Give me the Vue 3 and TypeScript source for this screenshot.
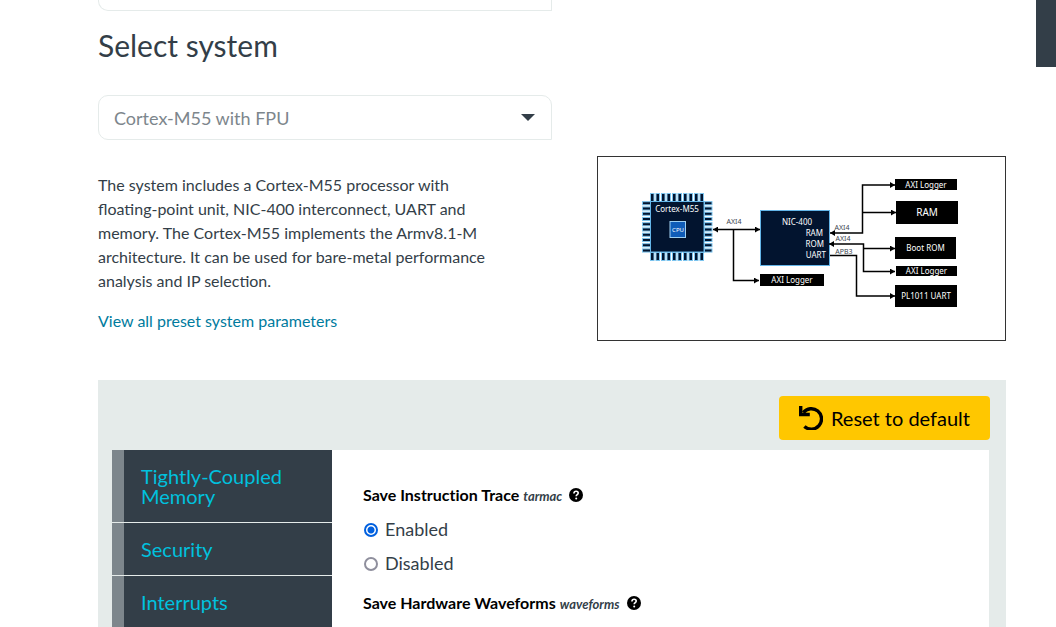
<script setup lang="ts">
import { ref } from 'vue'

interface Block { x: number; y: number; w: number; h: number; label: string; size: number }
interface Setting { id: string; title: string; code: string; value: string }

const systems = ['Cortex-M55 with FPU']
const system = ref(systems[0])
const tabs = ['Tightly-Coupled Memory', 'Security', 'Interrupts']
const settings = ref<Setting[]>([
  { id: 'tarmac', title: 'Save Instruction Trace', code: 'tarmac', value: 'Enabled' },
  { id: 'waveforms', title: 'Save Hardware Waveforms', code: 'waveforms', value: 'Disabled' },
])
const options = ['Enabled', 'Disabled']

const blocks: Block[] = [
  { x: 162, y: 117, w: 64, h: 12, label: 'AXI Logger', size: 8 },
  { x: 297, y: 22, w: 62, h: 11, label: 'AXI Logger', size: 8 },
  { x: 298, y: 44, w: 62, h: 23, label: 'RAM', size: 10 },
  { x: 297, y: 80, w: 61, h: 22, label: 'Boot ROM', size: 8 },
  { x: 298, y: 109, w: 61, h: 10, label: 'AXI Logger', size: 8 },
  { x: 297, y: 128, w: 62, h: 22, label: 'PL1011 UART', size: 8 },
]
const pins = Array.from({ length: 10 }, (_, i) => i)

function reset(): void {
  settings.value.forEach((s, i) => { s.value = options[i] })
}
</script>

<template>
  <div class="page">
    <aside class="side-tab"></aside>
    <main class="content">
      <div class="previous-field"></div>
      <h2 class="heading"><label for="system">Select system</label></h2>
      <div class="overview">
        <div class="summary">
          <div class="select-wrap">
            <select id="system" v-model="system" class="select">
              <option v-for="s in systems" :key="s">{{ s }}</option>
            </select>
            <svg class="caret" viewBox="0 0 14 7" aria-hidden="true"><path d="M0 0H14L7 7Z" /></svg>
          </div>
          <p class="description">
            The system includes a Cortex-M55 processor with floating-point unit, NIC-400 interconnect,
            UART and memory. The Cortex-M55 implements the Armv8.1-M architecture. It can be used for
            bare-metal performance analysis and IP selection.
          </p>
          <a class="link" href="#parameters">View all preset system parameters</a>
        </div>
        <div class="figure">
          <svg class="diagram" viewBox="0 0 407 183" role="img" aria-label="Cortex-M55 system diagram">
            <defs>
              <marker id="arrow" viewBox="0 0 5 6" refX="5" refY="3" markerWidth="5" markerHeight="6" markerUnits="userSpaceOnUse" orient="auto-start-reverse">
                <path d="M0 0L5 3L0 6Z" />
              </marker>
            </defs>
            <g class="pins">
              <template v-for="i in pins" :key="i">
                <rect :x="52.5 + i * 5.5" y="36.5" width="3.5" height="9" />
                <rect :x="52.5 + i * 5.5" y="95.5" width="3.5" height="8" />
                <rect x="44.5" :y="44.7 + i * 5.25" width="8" height="3.1" />
                <rect x="106.5" :y="44.7 + i * 5.25" width="7.5" height="3.1" />
              </template>
            </g>
            <rect class="chip" x="52.5" y="44.5" width="53.5" height="50.5" />
            <rect class="cpu" x="72" y="64.5" width="15.5" height="16" />
            <rect class="chip" x="162.5" y="53.5" width="69" height="55" />
            <g class="wires">
              <path marker-start="url(#arrow)" marker-end="url(#arrow)" d="M115 72.5H162" />
              <path marker-end="url(#arrow)" d="M135.5 72.5V123.5H161" />
              <path marker-start="url(#arrow)" marker-end="url(#arrow)" d="M232 76H264.5V28H297" />
              <path marker-end="url(#arrow)" d="M264.5 55.5H298" />
              <path marker-start="url(#arrow)" marker-end="url(#arrow)" d="M231 87H265.5V114.5H297" />
              <path marker-end="url(#arrow)" d="M265.5 91.5H297" />
              <path marker-end="url(#arrow)" d="M232 98.5H258.5V139H297" />
            </g>
            <g v-for="(b, i) in blocks" :key="i">
              <rect :x="b.x" :y="b.y" :width="b.w" :height="b.h" />
              <text class="block-text" :x="b.x + b.w / 2" :y="b.y + b.h / 2 + 3" :font-size="b.size">{{ b.label }}</text>
            </g>
            <text class="block-text" x="79" y="55" font-size="8">Cortex-M55</text>
            <text class="block-text" x="80" y="75" font-size="6">CPU</text>
            <text class="block-text" x="199" y="68" font-size="8">NIC-400</text>
            <text class="port" x="225" y="79">RAM</text>
            <text class="port" x="226" y="90">ROM</text>
            <text class="port" x="228" y="101">UART</text>
            <text class="bus" x="136" y="67">AXI4</text>
            <text class="bus" x="244" y="73">AXI4</text>
            <text class="bus" x="245" y="84">AXI4</text>
            <text class="bus" x="246" y="97">APB3</text>
          </svg>
        </div>
      </div>

      <section class="config">
        <div class="toolbar">
          <button class="reset" type="button" @click="reset">
            <svg class="reset-icon" viewBox="0 0 24 24" aria-hidden="true">
              <path class="reset-arc" d="M4.3 6.6A10.2 10.2 0 1 1 5.4 20.4" />
              <path d="M0 0H3.4V6.8H10.8V10.2H0Z" />
            </svg>
            <span>Reset to default</span>
          </button>
        </div>
        <div class="panel">
          <nav class="tabs">
            <button v-for="t in tabs" :key="t" class="tab" type="button">{{ t }}</button>
          </nav>
          <form class="settings">
            <fieldset v-for="s in settings" :key="s.id" class="setting">
              <legend class="legend">
                <span class="title">{{ s.title }}</span>
                <em class="code">{{ s.code }}</em>
                <svg class="help" viewBox="0 0 14 14" aria-hidden="true">
                  <circle cx="7" cy="7" r="7" />
                  <path class="help-mark" d="M4.9 5.5C5 3.8 6 3.3 7.1 3.3C8.3 3.3 9.2 4 9.2 5.1C9.2 6.7 7.2 6.6 7.2 8.3" />
                  <circle class="help-dot" cx="7.2" cy="10.5" r="1" />
                </svg>
              </legend>
              <label v-for="o in options" :key="o" class="option">
                <input v-model="s.value" class="radio" type="radio" :name="s.id" :value="o" />
                <span>{{ o }}</span>
              </label>
            </fieldset>
          </form>
        </div>
      </section>
    </main>
  </div>
</template>

<style>
body {
  margin: 0;
  background: #fff;
}
</style>

<style scoped>
.page {
  position: relative;
  box-sizing: border-box;
  height: 100vh;
  overflow: hidden;
  padding: 0 50px 0 98px;
  font-family: Lato, "Liberation Sans", sans-serif;
  font-size: 16px;
  line-height: 24px;
  color: #333e48;
}
.side-tab {
  position: absolute;
  top: 0;
  right: 0;
  width: 20px;
  height: 67px;
  background: #333e48;
}
.previous-field {
  box-sizing: border-box;
  width: 50%;
  height: 11px;
  border: 1px solid #e5ebea;
  border-top: 0;
  border-radius: 0 0 0 10px;
}
.heading {
  margin: 14px 0 30px;
  font-size: 30px;
  line-height: 40px;
  font-weight: 400;
}
.overview {
  display: grid;
  grid-template-columns: 1fr 1fr;
}
.summary {
  display: flex;
  flex-direction: column;
  align-items: flex-start;
}
.select-wrap {
  display: grid;
  align-items: center;
  width: 100%;
}
.select {
  grid-area: 1 / 1;
  box-sizing: border-box;
  width: 100%;
  height: 45px;
  padding: 0 40px 0 15px;
  border: 1px solid #e5ebea;
  border-radius: 10px 10px 0 10px;
  appearance: none;
  background: #fff;
  color: #7d868c;
  font: inherit;
  font-size: 18px;
}
.caret {
  grid-area: 1 / 1;
  justify-self: end;
  width: 14px;
  height: 7px;
  margin-right: 17px;
  fill: #333e48;
  pointer-events: none;
}
.description {
  max-width: 408px;
  margin: 33px 0 16px;
}
.link {
  color: #007b9e;
  text-decoration: none;
}
.figure {
  box-sizing: border-box;
  margin: 61px 0 0 45px;
  border: 1px solid #333;
  align-self: start;
}
.diagram {
  display: block;
  width: 100%;
  font-family: "Noto Sans", "Open Sans", sans-serif;
}
.pins rect {
  fill: #02142f;
  stroke: #7cc4ee;
  stroke-width: 1;
}
.chip {
  fill: #02142f;
  stroke: #64b5e8;
}
.cpu {
  fill: #0f5cb8;
  stroke: #9fd0f2;
}
.wires path {
  fill: none;
  stroke: #000;
  stroke-width: 1.5;
}
.block-text {
  fill: #fff;
  text-anchor: middle;
}
.port {
  fill: #fff;
  font-size: 8px;
  text-anchor: end;
}
.bus {
  fill: #3c4650;
  font-size: 7px;
  text-anchor: middle;
}
.config {
  margin-top: 39px;
  padding: 16px 16px 0 14px;
  background: #e5ebea;
}
.toolbar {
  display: flex;
  justify-content: flex-end;
  margin-bottom: 10px;
}
.reset {
  display: flex;
  align-items: center;
  gap: 8px;
  height: 44px;
  padding: 0 20px;
  border: 0;
  border-radius: 4px;
  background: #ffc700;
  color: #000;
  font: inherit;
  font-size: 20px;
}
.reset-icon {
  width: 24px;
  height: 24px;
}
.reset-arc {
  fill: none;
  stroke: #000;
  stroke-width: 3.4;
}
.panel {
  display: flex;
  align-items: stretch;
  margin-right: 1px;
  background: #fff;
}
.tabs {
  flex: 0 0 220px;
  display: flex;
  flex-direction: column;
  background: #333e48;
}
.tab {
  padding: 16px 32px 16px 17px;
  border: 0;
  border-left: 12px solid #7d868c;
  background: #333e48;
  color: #00c1de;
  font: inherit;
  font-size: 20px;
  line-height: 20px;
  text-align: left;
}
.tab + .tab {
  margin-top: 1px;
  box-shadow: 0 -1px #e5ebea;
}
.settings {
  flex: 1;
  padding: 33px 31px;
}
.setting {
  margin: 0;
  padding: 0 0 11px;
  border: 0;
}
.legend {
  display: flex;
  align-items: baseline;
  padding: 0;
  margin-bottom: 4px;
}
.title {
  font-weight: 700;
  color: #000;
  font-variant-ligatures: none;
}
.code {
  margin: 0 7px 0 4px;
  font-size: 13px;
  font-weight: 700;
}
.help {
  align-self: center;
  width: 14px;
  height: 14px;
  margin-bottom: 2px;
}
.help-mark {
  fill: none;
  stroke: #fff;
  stroke-width: 1.6;
}
.help-dot {
  fill: #fff;
}
.option {
  display: flex;
  align-items: center;
  gap: 7px;
  height: 34px;
  font-size: 18px;
}
.radio {
  appearance: none;
  box-sizing: border-box;
  width: 14px;
  height: 14px;
  margin: 2px 0 0 1px;
  border: 2px solid #8f8f9d;
  border-radius: 50%;
  background: #fff;
}
.radio:checked {
  border-color: #0060df;
  background: radial-gradient(circle, #0060df 3px, #fff 4px);
}
</style>
